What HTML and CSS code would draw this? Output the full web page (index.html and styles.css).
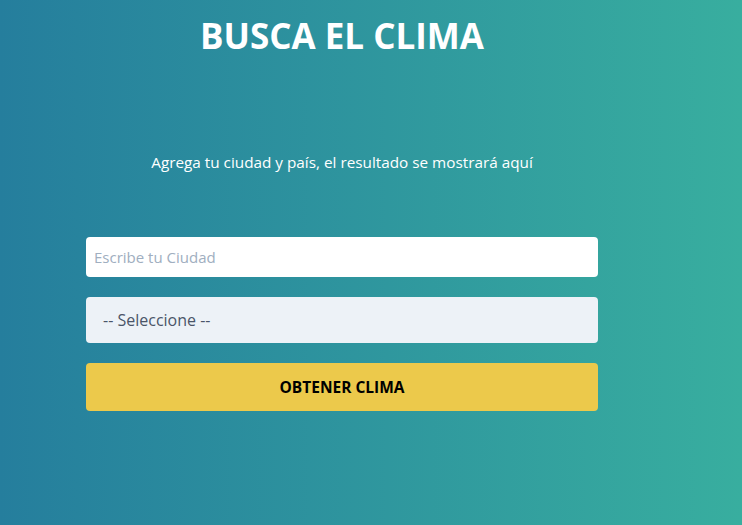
FILE: index.html
```html
<!DOCTYPE html>
<html lang="es">
<head>
<meta charset="utf-8">
<title>Busca el Clima</title>
<link rel="stylesheet" href="styles.css">
</head>
<body>
<main class="page">
  <section class="panel">
    <h1 class="title">BUSCA EL CLIMA</h1>
    <p class="message">Agrega tu ciudad y país, el resultado se mostrará aquí</p>
    <form class="form">
      <input class="field field-input" type="text" placeholder="Escribe tu Ciudad">
      <div class="field field-select">-- Seleccione --</div>
      <button class="btn" type="button">OBTENER CLIMA</button>
    </form>
  </section>
</main>
</body>
</html>
```

FILE: styles.css
```css
* { box-sizing: border-box; }
html, body { margin: 0; padding: 0; }
body {
  min-height: 100vh;
  background: linear-gradient(to right, #257e9d 0%, #38ae9f 100%);
  font-family: "Open Sans", "Noto Sans", sans-serif;
}
.page {
  width: 684px;
  padding-top: 14px;
}
.panel {
  display: flex;
  flex-direction: column;
  align-items: center;
}
.title {
  margin: 0;
  color: #fff;
  font-size: 35px;
  line-height: 44px;
  font-weight: 700;
  letter-spacing: 0;
}
.message {
  margin: 93px 0 0;
  color: #fff;
  font-size: 15.3px;
  line-height: 22px;
}
.form {
  margin-top: 64px;
  width: 512px;
  display: flex;
  flex-direction: column;
  gap: 20px;
}
.field {
  width: 100%;
  border: 0;
  border-radius: 4px;
  font-family: inherit;
  outline: none;
}
.field-input {
  height: 40px;
  background: #fff;
  padding: 0 8px;
  font-size: 15px;
}
.field-input::placeholder { color: #a0aec0; opacity: 1; }
.field-select {
  height: 46px;
  background: #edf2f7;
  color: #4a5568;
  padding: 0 17px;
  display: flex;
  align-items: center;
  font-size: 16px;
}
.btn {
  height: 48px;
  border: 0;
  border-radius: 4px;
  background: #ecc94b;
  color: #000;
  font-family: inherit;
  font-weight: 700;
  font-size: 15.5px;
  cursor: pointer;
}
```
